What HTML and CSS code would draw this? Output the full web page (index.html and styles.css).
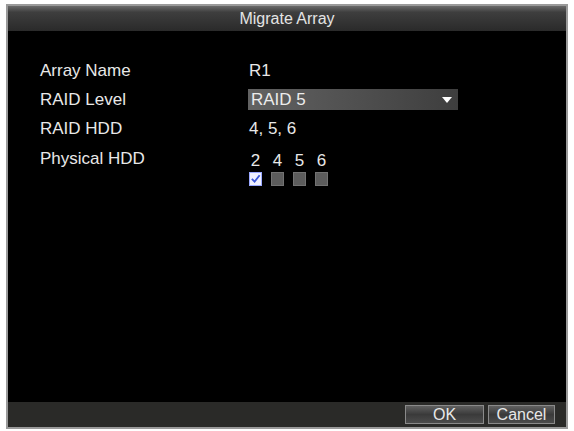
FILE: index.html
```html
<!DOCTYPE html>
<html lang="en">
<head>
  <meta charset="UTF-8" />
  <title>Migrate Array</title>
  <link rel="stylesheet" href="styles.css">
</head>
<body>
  <div class="dialog">
    <div class="title-bar">Migrate Array</div>

    <div class="content">
      <div class="row">
        <div class="label">Array Name</div>
        <div class="value">R1</div>
      </div>
      <div class="row">
        <div class="label">RAID Level</div>
        <div class="select">
          <span>RAID 5</span>
          <span class="arrow"></span>
        </div>
      </div>
      <div class="row">
        <div class="label">RAID HDD</div>
        <div class="value">4, 5, 6</div>
      </div>
      <div class="row hdd-row">
        <div class="label">Physical HDD</div>
        <div class="hdd-grid">
          <span class="num">2</span>
          <span class="num">4</span>
          <span class="num">5</span>
          <span class="num">6</span>
          <span class="box checked">
            <svg viewBox="0 0 12 12" width="11" height="11">
              <path d="M2 6.5 L5 9.5 L10.5 2.5" fill="none" stroke="#3a56d8" stroke-width="2"/>
            </svg>
          </span>
          <span class="box"></span>
          <span class="box"></span>
          <span class="box"></span>
        </div>
      </div>
    </div>

    <div class="footer">
      <button class="btn btn-ok">OK</button>
      <button class="btn btn-cancel">Cancel</button>
    </div>
  </div>
</body>
</html>
```

FILE: styles.css
```css
* {
  margin: 0;
  padding: 0;
  box-sizing: border-box;
}

html, body {
  height: 100%;
  background-color: #ffffff;
  font-family: 'Liberation Sans', Arial, sans-serif;
  overflow: hidden;
}

body {
  padding: 4px 6px 2px 6px;
}

.dialog {
  height: 100%;
  display: flex;
  flex-direction: column;
  background: #000000;
  border: 2px solid #9a9a9a;
  color: #e8e8e8;
}

.title-bar {
  height: 25px;
  background: linear-gradient(#6a6a6a, #3e3e3e 25%, #2a2a2a);
  text-align: center;
  font-size: 16px;
  line-height: 25px;
  color: #e4e4e4;
}

.content {
  flex: 1;
  padding: 25px 0 0 32px;
}

.row {
  display: flex;
  align-items: center;
  height: 29.3px;
  font-size: 17px;
}

.label {
  width: 208px;
}

.value {
  padding-left: 1px;
}

.select {
  width: 210px;
  height: 21px;
  display: flex;
  align-items: center;
  justify-content: space-between;
  padding: 0 6px 0 3px;
  background: linear-gradient(to right, #626262, #3e3e3e);
  color: #ececec;
}

.arrow {
  width: 0;
  height: 0;
  border-left: 5px solid transparent;
  border-right: 5px solid transparent;
  border-top: 6px solid #ffffff;
}

.hdd-row {
  align-items: flex-start;
}

.hdd-row .label {
  line-height: 29.3px;
}

.hdd-grid {
  display: grid;
  grid-template-columns: repeat(4, 13px);
  column-gap: 9px;
  row-gap: 4px;
  padding: 10px 0 0 1px;
}

.num {
  text-align: center;
  line-height: 14px;
}

.box {
  width: 13px;
  height: 14px;
  background: #5c5c5c;
  border: 1px solid #727272;
}

.box.checked {
  background: #eef0ff;
  border-color: #9aa8ff;
  display: flex;
  align-items: center;
  justify-content: center;
}

.footer {
  height: 25px;
  background: #2a2a28;
  display: flex;
  justify-content: flex-end;
  align-items: center;
  gap: 4px;
  padding-right: 11px;
}

.btn {
  height: 19px;
  overflow: hidden;
  white-space: nowrap;
  font-family: 'Liberation Sans', Arial, sans-serif;
  font-size: 16px;
  color: #e8e8e8;
  background: linear-gradient(#606060, #3a3a3a 50%, #4c4c4c);
  border: 1px solid #8a8a8a;
  line-height: 17px;
}

.btn-ok {
  width: 79px;
}

.btn-cancel {
  width: 67px;
}
```
